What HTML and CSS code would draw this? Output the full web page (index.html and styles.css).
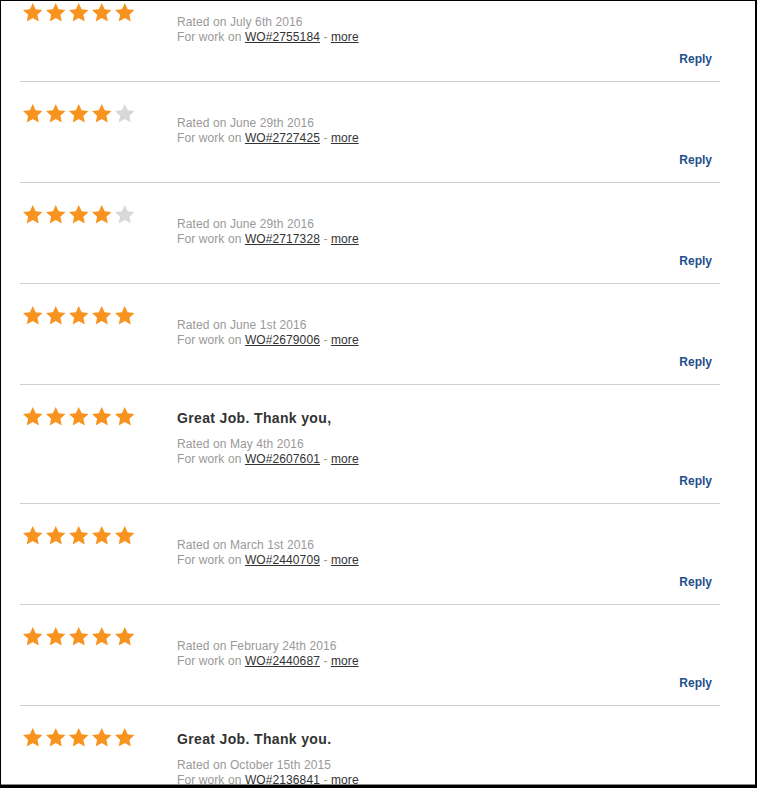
FILE: index.html
```html
<!DOCTYPE html>
<html>
<head>
<meta charset="utf-8">
<link rel="stylesheet" href="styles.css">
</head>
<body>
<svg class="defs" width="0" height="0" aria-hidden="true">
  <defs>
    <symbol id="star" viewBox="1.5 1.5 21 19.9">
      <polygon points="12,1.5 15.1,8.3 22.5,9.1 17,14.1 18.5,21.4 12,17.7 5.5,21.4 7,14.1 1.5,9.1 8.9,8.3"/>
    </symbol>
  </defs>
</svg>
<div class="frame">
  <ul class="reviews">
    <li class="review">
      <div class="stars"><svg class="star on"><use href="#star"/></svg><svg class="star on"><use href="#star"/></svg><svg class="star on"><use href="#star"/></svg><svg class="star on"><use href="#star"/></svg><svg class="star on"><use href="#star"/></svg></div>
      <div class="body">
        <div class="comment"></div>
        <div class="meta">Rated on July 6th 2016</div>
        <div class="meta">For work on <a href="#">WO#2755184</a> - <a href="#">more</a></div>
        <div class="actions"><a class="reply" href="#">Reply</a></div>
      </div>
    </li>
    <li class="review">
      <div class="stars"><svg class="star on"><use href="#star"/></svg><svg class="star on"><use href="#star"/></svg><svg class="star on"><use href="#star"/></svg><svg class="star on"><use href="#star"/></svg><svg class="star off"><use href="#star"/></svg></div>
      <div class="body">
        <div class="comment"></div>
        <div class="meta">Rated on June 29th 2016</div>
        <div class="meta">For work on <a href="#">WO#2727425</a> - <a href="#">more</a></div>
        <div class="actions"><a class="reply" href="#">Reply</a></div>
      </div>
    </li>
    <li class="review">
      <div class="stars"><svg class="star on"><use href="#star"/></svg><svg class="star on"><use href="#star"/></svg><svg class="star on"><use href="#star"/></svg><svg class="star on"><use href="#star"/></svg><svg class="star off"><use href="#star"/></svg></div>
      <div class="body">
        <div class="comment"></div>
        <div class="meta">Rated on June 29th 2016</div>
        <div class="meta">For work on <a href="#">WO#2717328</a> - <a href="#">more</a></div>
        <div class="actions"><a class="reply" href="#">Reply</a></div>
      </div>
    </li>
    <li class="review">
      <div class="stars"><svg class="star on"><use href="#star"/></svg><svg class="star on"><use href="#star"/></svg><svg class="star on"><use href="#star"/></svg><svg class="star on"><use href="#star"/></svg><svg class="star on"><use href="#star"/></svg></div>
      <div class="body">
        <div class="comment"></div>
        <div class="meta">Rated on June 1st 2016</div>
        <div class="meta">For work on <a href="#">WO#2679006</a> - <a href="#">more</a></div>
        <div class="actions"><a class="reply" href="#">Reply</a></div>
      </div>
    </li>
    <li class="review">
      <div class="stars"><svg class="star on"><use href="#star"/></svg><svg class="star on"><use href="#star"/></svg><svg class="star on"><use href="#star"/></svg><svg class="star on"><use href="#star"/></svg><svg class="star on"><use href="#star"/></svg></div>
      <div class="body">
        <div class="comment">Great Job. Thank you,</div>
        <div class="meta">Rated on May 4th 2016</div>
        <div class="meta">For work on <a href="#">WO#2607601</a> - <a href="#">more</a></div>
        <div class="actions"><a class="reply" href="#">Reply</a></div>
      </div>
    </li>
    <li class="review">
      <div class="stars"><svg class="star on"><use href="#star"/></svg><svg class="star on"><use href="#star"/></svg><svg class="star on"><use href="#star"/></svg><svg class="star on"><use href="#star"/></svg><svg class="star on"><use href="#star"/></svg></div>
      <div class="body">
        <div class="comment"></div>
        <div class="meta">Rated on March 1st 2016</div>
        <div class="meta">For work on <a href="#">WO#2440709</a> - <a href="#">more</a></div>
        <div class="actions"><a class="reply" href="#">Reply</a></div>
      </div>
    </li>
    <li class="review">
      <div class="stars"><svg class="star on"><use href="#star"/></svg><svg class="star on"><use href="#star"/></svg><svg class="star on"><use href="#star"/></svg><svg class="star on"><use href="#star"/></svg><svg class="star on"><use href="#star"/></svg></div>
      <div class="body">
        <div class="comment"></div>
        <div class="meta">Rated on February 24th 2016</div>
        <div class="meta">For work on <a href="#">WO#2440687</a> - <a href="#">more</a></div>
        <div class="actions"><a class="reply" href="#">Reply</a></div>
      </div>
    </li>
    <li class="review">
      <div class="stars"><svg class="star on"><use href="#star"/></svg><svg class="star on"><use href="#star"/></svg><svg class="star on"><use href="#star"/></svg><svg class="star on"><use href="#star"/></svg><svg class="star on"><use href="#star"/></svg></div>
      <div class="body">
        <div class="comment">Great Job. Thank you.</div>
        <div class="meta">Rated on October 15th 2015</div>
        <div class="meta">For work on <a href="#">WO#2136841</a> - <a href="#">more</a></div>
      </div>
    </li>
  </ul>
</div>
</body>
</html>
```
FILE: styles.css
```css
html, body {
  margin: 0;
  padding: 0;
  background: #fff;
}

.defs {
  position: absolute;
  width: 0;
  height: 0;
  overflow: hidden;
}

.frame {
  position: relative;
  box-sizing: border-box;
  width: 757px;
  height: 788px;
  overflow: hidden;
  background: #fff;
  border-top: 1px solid #000;
  border-left: 1px solid #000;
  border-right: 2px solid #000;
  border-bottom: 3px solid #000;
  font-family: "Liberation Sans", Arial, sans-serif;
  font-size: 12px;
}

.frame::after {
  content: "";
  position: absolute;
  left: 0;
  right: 0;
  bottom: 0;
  height: 1px;
  background: #8a8a8a;
}

.reviews {
  list-style: none;
  margin: -20px 0 0 19px;
  padding: 0;
  width: 700px;
}

.review {
  display: grid;
  grid-template-columns: 157px 1fr;
  border-bottom: 1px solid #cfcfcf;
}

.stars {
  display: flex;
  gap: 3.4px;
  padding: 22px 0 0 3.3px;
  align-items: flex-start;
}

.star {
  width: 19.5px;
  height: 18.6px;
  display: block;
}

.star.on { fill: #f7931e; }
.star.off { fill: #d8d8d8; }

.body {
  padding: 24px 0 14px 0;
}

.comment {
  font-size: 14px;
  font-weight: bold;
  line-height: 18px;
  letter-spacing: 0.35px;
  color: #333;
  margin-bottom: 10px;
}

.meta {
  line-height: 15px;
  letter-spacing: 0.1px;
  color: #999;
}

.meta a {
  color: #333;
  text-decoration: underline;
}

.actions {
  margin-top: 7px;
  padding-right: 8px;
  text-align: right;
  line-height: 15px;
}

.reply {
  color: #1f4f8c;
  font-weight: bold;
  text-decoration: none;
}
```
